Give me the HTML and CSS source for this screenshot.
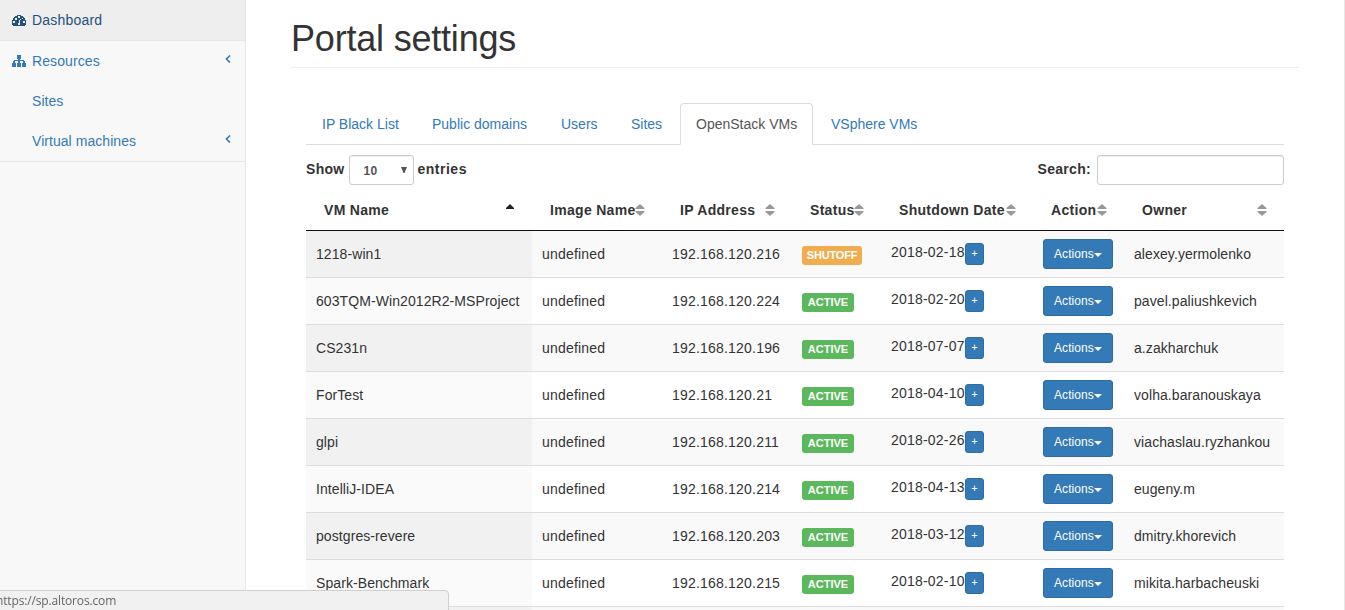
FILE: index.html
```
<!DOCTYPE html>
<html lang="en">
<head>
<meta charset="utf-8">
<title>Portal settings</title>
<link rel="stylesheet" href="styles.css">
</head>
<body>
<svg class="defs" width="0" height="0">
  <symbol id="sort" viewBox="0 0 10 12"><path d="M5 0L9.500 4v1h-9V4zM.5 7h9v1L5 12 .5 8z" fill="#999"/></symbol>
</svg>
<div class="layout">
  <nav class="sidebar">
    <a class="nav-item active"><svg class="icon" viewBox="0 0 14 11" shape-rendering="crispEdges"><path fill="currentColor" fill-rule="evenodd" d="M5 0h4v1h2v1h1v1h1v2h1v5h-1v1H1v-1H0V5h1V3h1V2h1V1h2zM6 1v2h2V1zM3 3v2h2V3zM10 3v1h1V3zM1 6v2h2V6zM11 6v2h2V6zM8 4v1H7v3H6v2h2V5h1V4z"/></svg><span>Dashboard</span></a>
    <a class="nav-item"><svg class="icon" viewBox="0 0 14 12" shape-rendering="crispEdges"><path fill="currentColor" d="M5 0h4v4H8v1h4v1h1v2h1v4h-4V8h1V6H8v2h1v4H5V8h1V6H3v2h1v4H0V8h1V6h1V5h4V4H5z"/></svg><span>Resources</span><svg class="chev" viewBox="0 0 6 8"><path d="M5 .5L1.500 4 5 7.500" fill="none" stroke="currentColor" stroke-width="1.600"/></svg></a>
    <a class="nav-item sub"><span>Sites</span></a>
    <a class="nav-item sub last"><span>Virtual machines</span><svg class="chev" viewBox="0 0 6 8"><path d="M5 .5L1.500 4 5 7.500" fill="none" stroke="currentColor" stroke-width="1.600"/></svg></a>
  </nav>
  <main class="content">
    <h1>Portal settings</h1>
    <section class="panel">
      <div class="tabs">
        <a class="tab">IP Black List</a><a class="tab">Public domains</a><a class="tab">Users</a><a class="tab">Sites</a><a class="tab current">OpenStack VMs</a><a class="tab">VSphere VMs</a>
      </div>
      <div class="controls">
        <label class="length"><span>Show</span><span class="select"><span>10</span><svg width="6" height="6" viewBox="0 0 6 6"><path d="M0 0h6L3.500 6h-1z" fill="#555"/></svg></span><span>entries</span></label>
        <label class="search"><span>Search:</span><input type="text"></label>
      </div>
      <table>
        <colgroup><col class="c-name"><col class="c-image"><col class="c-ip"><col class="c-status"><col class="c-date"><col class="c-action"><col class="c-owner"></colgroup>
        <thead><tr>
          <th><div class="head asc"><span>VM Name</span><svg viewBox="0 0 10 12"><path d="M5 0L9 4v1H1V4z" fill="#222"/></svg></div></th>
          <th><div class="head"><span>Image Name</span><svg><use href="#sort"/></svg></div></th>
          <th><div class="head"><span>IP Address</span><svg><use href="#sort"/></svg></div></th>
          <th><div class="head"><span>Status</span><svg><use href="#sort"/></svg></div></th>
          <th><div class="head"><span>Shutdown Date</span><svg><use href="#sort"/></svg></div></th>
          <th><div class="head"><span>Action</span><svg><use href="#sort"/></svg></div></th>
          <th><div class="head"><span>Owner</span><svg><use href="#sort"/></svg></div></th>
        </tr></thead>
        <tbody>
          <tr><td>1218-win1</td><td>undefined</td><td class="num">192.168.120.216</td><td><span class="badge off">SHUTOFF</span></td><td><div class="date"><span>2018-02-18</span><b>+</b></div></td><td><span class="btn">Actions<i></i></span></td><td>alexey.yermolenko</td></tr>
          <tr><td>603TQM-Win2012R2-MSProject</td><td>undefined</td><td class="num">192.168.120.224</td><td><span class="badge">ACTIVE</span></td><td><div class="date"><span>2018-02-20</span><b>+</b></div></td><td><span class="btn">Actions<i></i></span></td><td>pavel.paliushkevich</td></tr>
          <tr><td>CS231n</td><td>undefined</td><td class="num">192.168.120.196</td><td><span class="badge">ACTIVE</span></td><td><div class="date"><span>2018-07-07</span><b>+</b></div></td><td><span class="btn">Actions<i></i></span></td><td>a.zakharchuk</td></tr>
          <tr><td>ForTest</td><td>undefined</td><td class="num">192.168.120.21</td><td><span class="badge">ACTIVE</span></td><td><div class="date"><span>2018-04-10</span><b>+</b></div></td><td><span class="btn">Actions<i></i></span></td><td>volha.baranouskaya</td></tr>
          <tr><td>glpi</td><td>undefined</td><td class="num">192.168.120.211</td><td><span class="badge">ACTIVE</span></td><td><div class="date"><span>2018-02-26</span><b>+</b></div></td><td><span class="btn">Actions<i></i></span></td><td>viachaslau.ryzhankou</td></tr>
          <tr><td>IntelliJ-IDEA</td><td>undefined</td><td class="num">192.168.120.214</td><td><span class="badge">ACTIVE</span></td><td><div class="date"><span>2018-04-13</span><b>+</b></div></td><td><span class="btn">Actions<i></i></span></td><td>eugeny.m</td></tr>
          <tr><td>postgres-revere</td><td>undefined</td><td class="num">192.168.120.203</td><td><span class="badge">ACTIVE</span></td><td><div class="date"><span>2018-03-12</span><b>+</b></div></td><td><span class="btn">Actions<i></i></span></td><td>dmitry.khorevich</td></tr>
          <tr><td>Spark-Benchmark</td><td>undefined</td><td class="num">192.168.120.215</td><td><span class="badge">ACTIVE</span></td><td><div class="date"><span>2018-02-10</span><b>+</b></div></td><td><span class="btn">Actions<i></i></span></td><td>mikita.harbacheuski</td></tr>
          <tr><td></td><td></td><td></td><td></td><td></td><td></td><td></td></tr>
        </tbody>
      </table>
    </section>
  </main>
</div>
<div class="statusbar"><span>https://sp.altoros.com</span></div>
</body>
</html>
```
FILE: styles.css
```
* { box-sizing: border-box; }
body { margin: 0; height: 610px; overflow: hidden; background: #f8f8f8; color: #333; font: 14px/20px "Liberation Sans", Arial, sans-serif; }
.defs { position: absolute; }
.layout { display: flex; height: 610px; overflow: hidden; }
.sidebar { width: 245px; flex: none; color: #337ab7; letter-spacing: .1px; }
.nav-item { display: flex; align-items: center; height: 40px; padding: 0 14px 0 12px; }
.nav-item.active { height: 41px; background: #eee; color: #23527c; border-bottom: 1px solid #e7e7e7; letter-spacing: .2px; }
.nav-item.sub { padding-left: 32px; letter-spacing: .05px; }
.nav-item.last { height: 41px; border-bottom: 1px solid #e7e7e7; }
.icon { width: 14px; height: 12px; margin-right: 6px; }
.active .icon { height: 11px; margin-top: 1px; }
.chev { width: 6px; height: 8px; margin: -5px 0 0 auto; }
.content { width: 1100px; height: 680px; flex: none; background: #fff; border-left: 1px solid #e7e7e7; border-right: 1px solid #e7e7e7; padding: 0 45px; }
h1 { margin: 0 0 35px; height: 68px; padding-top: 19px; border-bottom: 1px solid #eee; font-size: 36px; line-height: 40px; font-weight: 400; letter-spacing: -.2px; }
.panel { padding: 0 15px; }
.tabs { display: flex; gap: 2px; height: 42px; border-bottom: 1px solid #ddd; }
.tab { height: 42px; padding: 10px 0 10px 15px; border: 1px solid transparent; color: #337ab7; white-space: nowrap; }
.tab:nth-child(1) { width: 108px; }
.tab:nth-child(2) { width: 127px; }
.tab:nth-child(3) { width: 68px; }
.tab:nth-child(4) { width: 63px; }
.tab:nth-child(5) { width: 133px; }
.tab.current { background: #fff; color: #555; border-color: #ddd #ddd #fff; border-radius: 4px 4px 0 0; }
.controls { display: flex; justify-content: space-between; height: 45px; padding-top: 10px; font-weight: 700; letter-spacing: .3px; }
.length, .search { display: flex; height: 30px; line-height: 28px; }
.length { gap: 4px; }
.length > :last-child { letter-spacing: .5px; }
.search { gap: 6px; }
.select { display: flex; align-items: center; justify-content: space-between; width: 65px; height: 30px; border: 1px solid #ccc; border-radius: 3px; padding: 2px 6px 0 14px; font-size: 12px; color: #555; box-shadow: inset 0 1px 1px rgba(0,0,0,.075); }
.select svg { margin-top: -3px; }
input { width: 187px; height: 30px; border: 1px solid #ccc; border-radius: 3px; padding: 5px 10px; box-shadow: inset 0 1px 1px rgba(0,0,0,.075); }
table { width: 978px; table-layout: fixed; border-collapse: separate; border-spacing: 0; }
.c-name { width: 226px; }
.c-image, .c-ip { width: 130px; }
.c-status { width: 89px; }
.c-date { width: 152px; }
.c-action { width: 91px; }
.c-owner { width: 160px; }
th { height: 41px; padding: 0 17px 0 18px; border-bottom: 1px solid #111; text-align: left; letter-spacing: .3px; }
.head { display: flex; align-items: center; justify-content: space-between; white-space: nowrap; }
.head svg { width: 10px; height: 12px; flex: none; }
.head span { width: 0; }
td { height: 47px; padding: 0 10px; border-top: 1px solid #ddd; white-space: nowrap; line-height: 20px; vertical-align: middle; letter-spacing: .08px; }
td:nth-child(2) { letter-spacing: .2px; }
tbody tr:first-child td { height: 46px; border-top: 0; }
tbody tr:nth-child(odd) td { background: #f9f9f9; }
tbody tr:nth-child(odd) td:first-child { background: #f1f1f1; }
tbody tr:nth-child(even) td:first-child { background: #fafafa; }
.num, .date { letter-spacing: .2px; }
.badge { display: block; width: 52px; height: 19px; margin-top: 3px; border-radius: 3px; background: #5cb85c; color: #fff; font-size: 11px; font-weight: 700; line-height: 19px; text-align: center; letter-spacing: 0; }
.badge.off { width: 60px; background: #f0ad4e; letter-spacing: -.2px; }
.date { display: flex; align-items: center; }
.date span { width: 74px; margin-top: -5px; }
.date b { width: 19px; height: 22px; border: 1px solid #2e6da4; border-radius: 3px; background: #337ab7; color: #fff; font-size: 11px; font-weight: 400; line-height: 19px; text-align: center; }
.btn { display: flex; align-items: center; justify-content: center; width: 70px; height: 30px; border: 1px solid #2e6da4; border-radius: 3px; background: #337ab7; color: #fff; font-size: 12px; }
.btn i { margin-top: 2px; border: 4px solid transparent; border-top-color: #fff; border-bottom: 0; }
.statusbar { position: fixed; left: -1px; bottom: -1px; width: 450px; height: 21px; border: 1px solid #d0d0d0; border-radius: 0 4px 0 0; background: #f1f1f1; color: #666; font: 12px/20px "Open Sans", sans-serif; letter-spacing: -.15px; }
.statusbar span { margin-left: -4px; }
```
